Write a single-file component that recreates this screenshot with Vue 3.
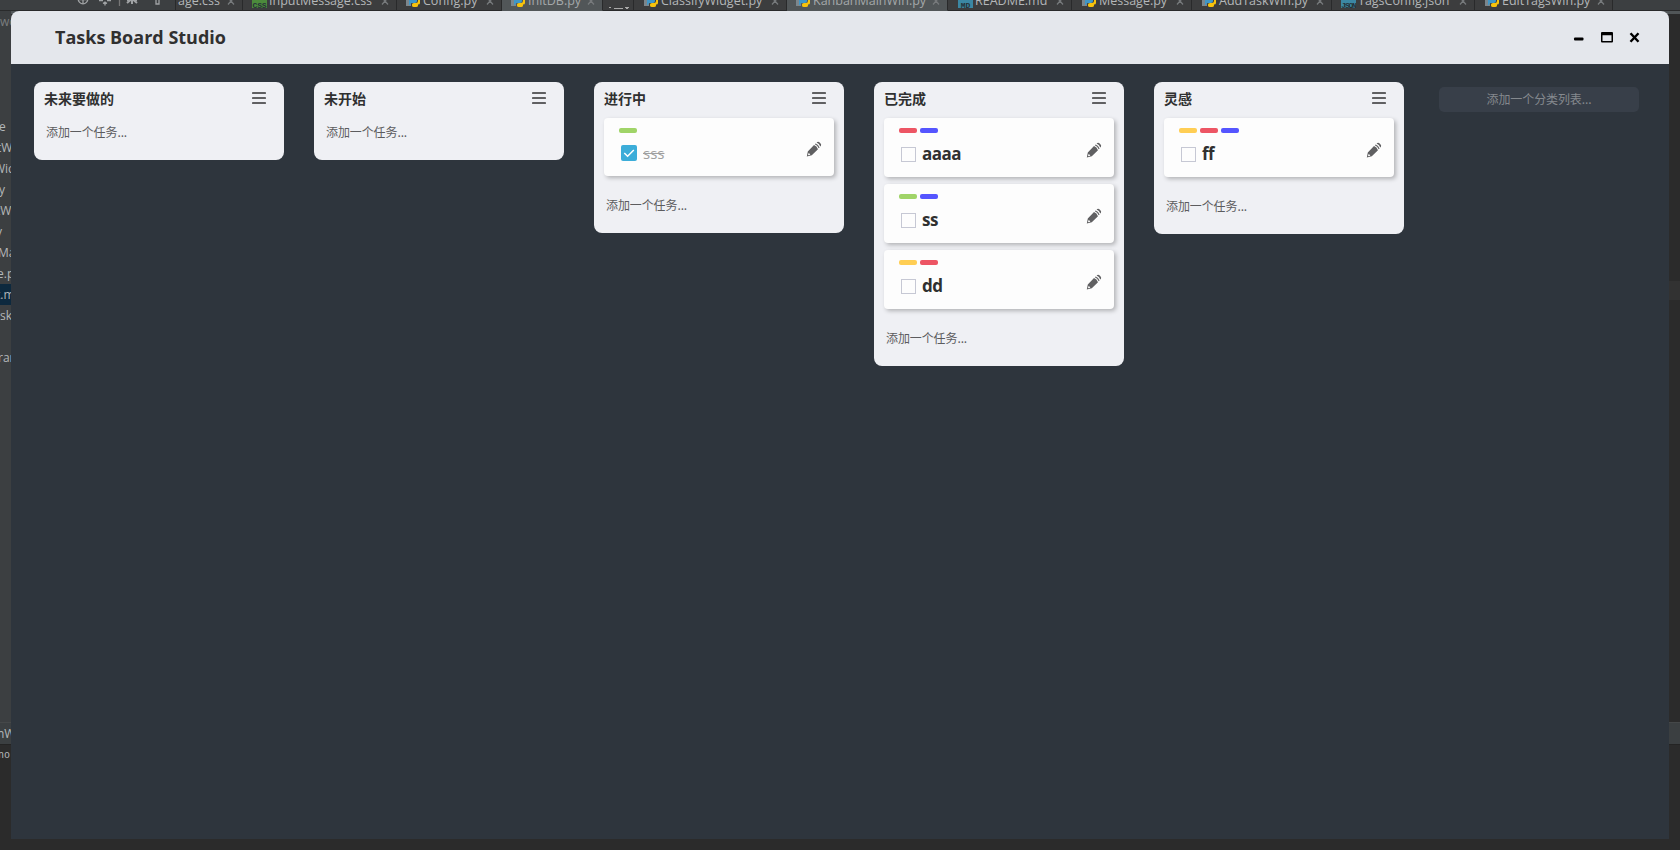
<script setup>
const tabs = [
  { name: 'age.css', kind: 'none', width: 67, pad: 2 },
  { name: 'InputMessage.css', kind: 'css', width: 154, pad: 9 },
  { name: 'Config.py', kind: 'py', width: 105, pad: 9 },
  { name: 'InitDB.py', kind: 'py', width: 101, pad: 9, active: true },
  { name: '', kind: 'list', width: 31, pad: 5 },
  { name: 'ClassifyWidget.py', kind: 'py', width: 153, pad: 10 },
  { name: 'KanbanMainWin.py', kind: 'py', width: 161, pad: 9, active: true },
  { name: 'README.md', kind: 'md', width: 124, pad: 10 },
  { name: 'Message.py', kind: 'py', width: 120, pad: 10 },
  { name: 'AddTaskWin.py', kind: 'py', width: 140, pad: 10 },
  { name: 'TagsConfig.json', kind: 'json', width: 143, pad: 9 },
  { name: 'EditTagsWin.py', kind: 'py', width: 138, pad: 10 },
]

const files = [
  { text: 'e', x: -1 },
  { text: 'tW', x: -3 },
  { text: 'Wic', x: -6 },
  { text: 'y', x: -1 },
  { text: 'tW', x: -4 },
  { text: 'y', x: -4 },
  { text: 'Ma', x: -2 },
  { text: 'e.p', x: -3 },
  { text: 't.m', x: -4, selected: true },
  { text: 'sk', x: 0 },
  { text: '', x: 0 },
  { text: 'ran', x: -2 },
]

const columns = [
  { title: '未来要做的', tasks: [] },
  { title: '未开始', tasks: [] },
  { title: '进行中', tasks: [{ text: 'sss', tags: ['green'], done: true }] },
  {
    title: '已完成',
    tasks: [
      { text: 'aaaa', tags: ['red', 'blue'] },
      { text: 'ss', tags: ['green', 'blue'] },
      { text: 'dd', tags: ['yellow', 'red'] },
    ],
  },
  { title: '灵感', tasks: [{ text: 'ff', tags: ['yellow', 'red', 'blue'] }] },
]
</script>

<template>
  <div class="desktop">
    <div class="editor">
      <div class="tabbar">
        <div class="tools">
          <svg width="100" height="10" viewBox="0 0 100 10" fill="none" stroke="#a0a3a5" stroke-width="1.3">
            <circle cx="12" cy="-1" r="4.800" />
            <path d="M12 -2V4M7 -.5h10M28 .5h4M36 .5h4M34 2.500v3M32 3.500l2-1.500 2 1.500" />
            <path d="M48.500 0v6" stroke="#777" />
            <path d="M59.500 0l-3.500 3M62.500 0l3.500 3M61 -1v5M56 0h10" stroke-width="2" />
            <path d="M85 0v4h3v-4" />
          </svg>
        </div>
        <div
          v-for="(t, i) in tabs"
          :key="i"
          class="tab"
          :class="{ active: t.active }"
          :style="{ width: t.width + 'px', paddingLeft: t.pad + 'px' }"
        >
          <svg v-if="t.kind === 'py'" class="ficon" width="15" height="8" viewBox="0 0 15 8">
            <path d="M0 0h5v6h-5z" fill="#7c868c" />
            <path d="M3 0h8v1q0 2-2 2h-3q-2 0-2 2h-1z" fill="#3f97c8" />
            <path d="M14 0v3q0 1.500-2 1.500v1q0 1.500-2 1.500h-2q-2 0-2-1.500v-1q0-1.500 2-1.500h2q2 0 2-2v-1z" fill="#f7c30c" />
          </svg>
          <span v-else-if="t.kind === 'list'" class="listicon">
            <svg width="22" height="6" viewBox="0 0 22 6"><path d="M1 .5h2M6 1.500h9M17 0h4l-2 2z" stroke="#aaa" fill="#aaa" stroke-width="1" /></svg>
          </span>
          <span v-else-if="t.kind !== 'none'" class="badge" :class="t.kind">{{ t.kind.toUpperCase() }}</span>
          <span v-if="t.name" class="fname">{{ t.name }}</span>
          <svg v-if="t.name" class="tclose" width="8" height="5" viewBox="0 0 8 5"><path d="M1 4.500L4 1l3 3.500M2 -1L4 1l2-2" stroke="#777a7c" stroke-width="1.200" fill="none" /></svg>
        </div>
        <div class="tabrest"></div>
      </div>
      <div class="side">
        <span class="crumb">wo</span>
        <div class="files">
          <div v-for="(f, i) in files" :key="i" class="file" :class="{ selected: f.selected }" :style="{ textIndent: f.x + 'px' }">{{ f.text }}</div>
        </div>
      </div>
      <div class="code"><div class="caretline"></div></div>
      <div class="runbar">nW</div>
      <div class="console">nor</div>
    </div>

    <main class="window">
      <header class="titlebar">
        <h1>Tasks Board Studio</h1>
        <div class="controls">
          <svg width="70" height="16" viewBox="0 0 70 16">
            <rect x="1" y="7.500" width="9.500" height="3" rx="1" />
            <path fill-rule="evenodd" d="M29 2h10q1 0 1 1v8.500q0 1-1 1h-10q-1 0-1-1v-8.500q0-1 1-1zM29.500 5.200v5.800h9v-5.800z" />
            <path d="M57.500 3.200l8 8.600M65.500 3.200l-8 8.600" stroke="#000" stroke-width="2.400" />
          </svg>
        </div>
      </header>

      <div class="board">
        <section v-for="c in columns" :key="c.title" class="column">
          <div class="colhead">
            <h2>{{ c.title }}</h2>
            <svg width="14" height="12" viewBox="0 0 14 12" fill="#606062">
              <rect width="14" height="2" rx=".4" /><rect y="5" width="14" height="2" rx=".4" /><rect y="10" width="14" height="2" rx=".4" />
            </svg>
          </div>
          <div v-if="c.tasks.length" class="tasks">
            <article v-for="t in c.tasks" :key="t.text" class="card" :class="{ done: t.done }">
              <div class="info">
                <div class="tags"><i v-for="g in t.tags" :key="g" :class="g"></i></div>
                <div class="line">
                  <span class="check">
                    <svg v-if="t.done" width="16" height="16" viewBox="0 0 16 16"><path d="M3.300 8l3.300 3.300 6.200-6.300" stroke="#fff" stroke-width="1.500" fill="none" /></svg>
                  </span>
                  <span class="label">{{ t.text }}</span>
                </div>
              </div>
              <svg class="pencil" width="16" height="16" viewBox="0 0 16 16">
                <g fill="#606062">
                  <path fill-rule="evenodd" d="M.8 15.400L1.800 10.400 8 4q2.800.8 4 4.200L5.800 14.200zM1.900 14.300l2.400-.6q-.3-1.300-1.700-1.800z" />
                  <path d="M8.800 3.200l.9-.8q2.700 1 3.900 4l-.9.900q-1.200-3-3.900-4.100z" />
                  <path d="M10.600 1.600l.7-.6q.8-.5 1.700.1 1.400.8 2 2.200.4.900-.2 1.600l-.5.500q-1-2.600-3.700-3.800z" />
                </g>
              </svg>
            </article>
          </div>
          <div class="addtask">添加一个任务...</div>
        </section>
        <div class="addlist">添加一个分类列表...</div>
      </div>
    </main>
  </div>
</template>

<style>
body { margin: 0; background: #2b2b2b; overflow: hidden; }
</style>

<style scoped>
.desktop { position: relative; width: 1680px; height: 850px; overflow: hidden; background: #2b2b2b; font-family: "Open Sans", "Noto Sans CJK SC", sans-serif; }
.editor { position: absolute; inset: 0; display: grid; grid-template: 11px 711px 23px 1fr / 11px 1fr; color: #b4b7b9; font-size: 12px; white-space: nowrap; }
.tabbar { grid-column: 1 / 3; display: flex; height: 11px; overflow: hidden; background: #3c3f41; }
.tools { box-sizing: border-box; flex: none; width: 176px; height: 11px; padding-left: 71px; border-right: 1px solid #292a2b; border-bottom: 1px solid #292a2b; }
.tools svg { display: block; }
.tab { box-sizing: border-box; flex: none; display: flex; align-items: flex-start; height: 11px; border-right: 1px solid #292a2b; border-bottom: 1px solid #292a2b; background: #3c3d3e; overflow: hidden; }
.tab.active { background: #515658; border-bottom-color: #515658; color: #a4a8aa; }
.tabrest { flex: 1; height: 10px; border-bottom: 1px solid #292a2b; }
.ficon { flex: none; margin-right: 2px; }
.badge { flex: none; width: 15px; height: 8px; margin-right: 2px; overflow: hidden; font: bold 8px/11px "Liberation Mono", monospace; text-align: center; color: #263238; }
.badge.css { background: #4c8b3c; letter-spacing: -.2px; }
.badge.md, .badge.json { background: #3b87a3; }
.badge.json { letter-spacing: -1.2px; }
.fname { line-height: 16px; margin-top: -7px; flex: none; font-size: 12.5px; }
.tclose { margin-left: auto; margin-right: 7px; flex: none; }
.side { background: #3c3f41; overflow: hidden; }
.crumb { display: block; height: 20px; line-height: 22px; color: #7a7d7e; }
.files { padding-top: 85px; }
.file { height: 21px; line-height: 22px; overflow: hidden; }
.file.selected { background: #0d293e; }
.code { border-top: 3px solid #515658; background: #2b2b2b; }
.caretline { margin-top: 267px; height: 19px; background: #323232; }
.runbar { grid-column: 1 / 3; background: #3b3f41; border-bottom: 1px solid #242424; line-height: 22px; text-indent: -3px; box-sizing: border-box; border-top: 1px solid #454849; }
.console { grid-column: 1 / 3; font: 10px/19px "DejaVu Sans Mono", monospace; text-indent: -2px; }

.window { position: absolute; left: 11px; top: 11px; width: 1658px; height: 828px; background: #2e353d; border-radius: 8px 8px 0 0; overflow: hidden; }
.titlebar { height: 53px; background: #e4e7ec; display: flex; justify-content: space-between; align-items: flex-start; padding: 0 26px 0 44px; }
h1 { margin: 14px 0 0; font-size: 18px; line-height: 24px; font-weight: 700; color: #303030; letter-spacing: 0; }
.controls { margin-top: 19px; height: 16px; }
.controls svg { display: block; }
.board { display: flex; align-items: flex-start; gap: 30px; padding: 18px 0 0 23px; }
.column { flex: none; box-sizing: border-box; width: 250px; padding: 0 10px; background: #eff0f4; border-radius: 8px; }
.colhead { height: 36px; display: flex; justify-content: space-between; align-items: flex-start; padding-right: 8px; }
.colhead svg { margin-top: 10px; }
h2 { margin: 5px 0 0; font: 700 14px/22px "Noto Sans CJK SC", sans-serif; color: #303030; }
.tasks { display: flex; flex-direction: column; gap: 7px; padding-bottom: 15px; }
.card { box-sizing: border-box; height: 59px; display: flex; justify-content: space-between; padding: 10px 12px 0 15px; background: #fdfdfd; border-radius: 4px; box-shadow: 2px 2px 4px rgba(0, 0, 0, .26); }
.card.done { height: 58px; }
.tags { display: flex; gap: 3px; height: 5px; }
.tags i { width: 18px; height: 5px; border-radius: 2px; }
.green { background: #a0d468; }
.red { background: #ed5564; }
.blue { background: #5555ff; }
.yellow { background: #ffce54; }
.line { display: flex; align-items: flex-start; padding: 14px 0 0 2px; }
.check { box-sizing: border-box; width: 15px; height: 15px; border: 1px solid #c6c8d4; }
.label { margin: -5px 0 0 6px; font-size: 17px; line-height: 24px; font-weight: 700; color: #303030; letter-spacing: -.5px; }
.done .line { padding-top: 12px; }
.done .check { width: 16px; height: 16px; border: 0; border-radius: 2px; background: #3cadd9; }
.done .check svg { display: block; }
.done .label { margin: -4px 0 0 6px; font-size: 15px; font-weight: 400; color: #a0a0a0; text-decoration: line-through; letter-spacing: 0; }
.pencil { margin-top: 14px; }
.done .pencil { margin-top: 13px; }
.addtask { height: 42px; padding-left: 2px; box-sizing: border-box; padding-top: 4px; font: 12px/20px "Noto Sans CJK SC", sans-serif; color: #5c5c5e; letter-spacing: -.1px; }
.addlist { width: 200px; height: 25px; margin: 5px 0 0 5px; border-radius: 5px; background: #383f49; text-align: center; font: 12px/24px "Noto Sans CJK SC", sans-serif; color: #85898e; letter-spacing: -.1px; }
</style>
